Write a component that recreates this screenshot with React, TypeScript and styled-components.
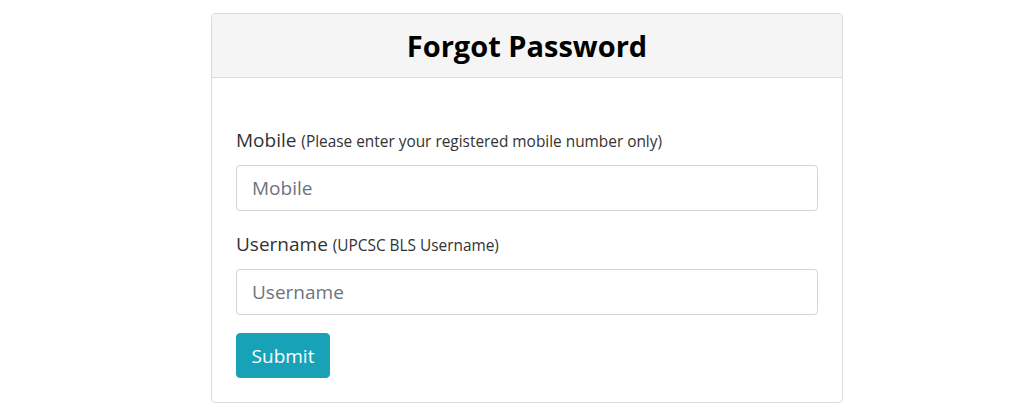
import styled, { createGlobalStyle } from 'styled-components';

const GlobalStyle = createGlobalStyle`
  html, body {
    margin: 0;
    padding: 0;
    background: #ffffff;
    font-family: 'Open Sans', 'Noto Sans', sans-serif;
    color: #212529;
  }
  * { box-sizing: border-box; }
`;

const Page = styled.div`
  padding: 13px 0 0 211px;
`;

const Card = styled.div`
  width: 632px;
  border: 1px solid #dcdcdc;
  border-radius: 4px;
  background: #ffffff;
  overflow: hidden;
`;

const CardHeader = styled.div`
  height: 64px;
  display: flex;
  align-items: center;
  justify-content: center;
  background: #f5f5f5;
  border-bottom: 1px solid #dcdcdc;
`;

const Title = styled.h2`
  margin: 0;
  font-size: 29px;
  font-weight: 700;
  color: #000;
`;

const CardBody = styled.form`
  padding: 49px 24px 24px;
  display: flex;
  flex-direction: column;
`;

const Group = styled.div`
  display: flex;
  flex-direction: column;
  gap: 10px;
  margin-bottom: 20px;

  &:last-of-type {
    margin-bottom: 18px;
  }
`;

const Label = styled.label`
  font-size: 19px;
  line-height: 27px;
  color: #333;
`;

const Hint = styled.small`
  font-size: 15.4px;
  color: #333;
`;

const Input = styled.input`
  height: 46px;
  width: 100%;
  padding: 0 15px;
  font-family: inherit;
  font-size: 19px;
  color: #495057;
  border: 1px solid #ced4da;
  border-radius: 4px;
  outline: none;

  &::placeholder {
    color: #6c757d;
  }
`;

const SubmitButton = styled.button`
  align-self: flex-start;
  height: 45px;
  width: 94px;
  padding: 0;
  font-family: inherit;
  font-size: 19px;
  color: #fff;
  background: #17a2b8;
  border: 1px solid #17a2b8;
  border-radius: 4px;
  cursor: pointer;
`;

export default function App() {
  return (
    <>
      <GlobalStyle />
      <Page>
        <Card>
          <CardHeader>
            <Title>Forgot Password</Title>
          </CardHeader>
          <CardBody onSubmit={(e) => e.preventDefault()}>
            <Group>
              <Label htmlFor="mobile">
                Mobile <Hint>(Please enter your registered mobile number only)</Hint>
              </Label>
              <Input id="mobile" placeholder="Mobile" />
            </Group>
            <Group>
              <Label htmlFor="username">
                Username <Hint>(UPCSC BLS Username)</Hint>
              </Label>
              <Input id="username" placeholder="Username" />
            </Group>
            <SubmitButton type="submit">Submit</SubmitButton>
          </CardBody>
        </Card>
      </Page>
    </>
  );
}
